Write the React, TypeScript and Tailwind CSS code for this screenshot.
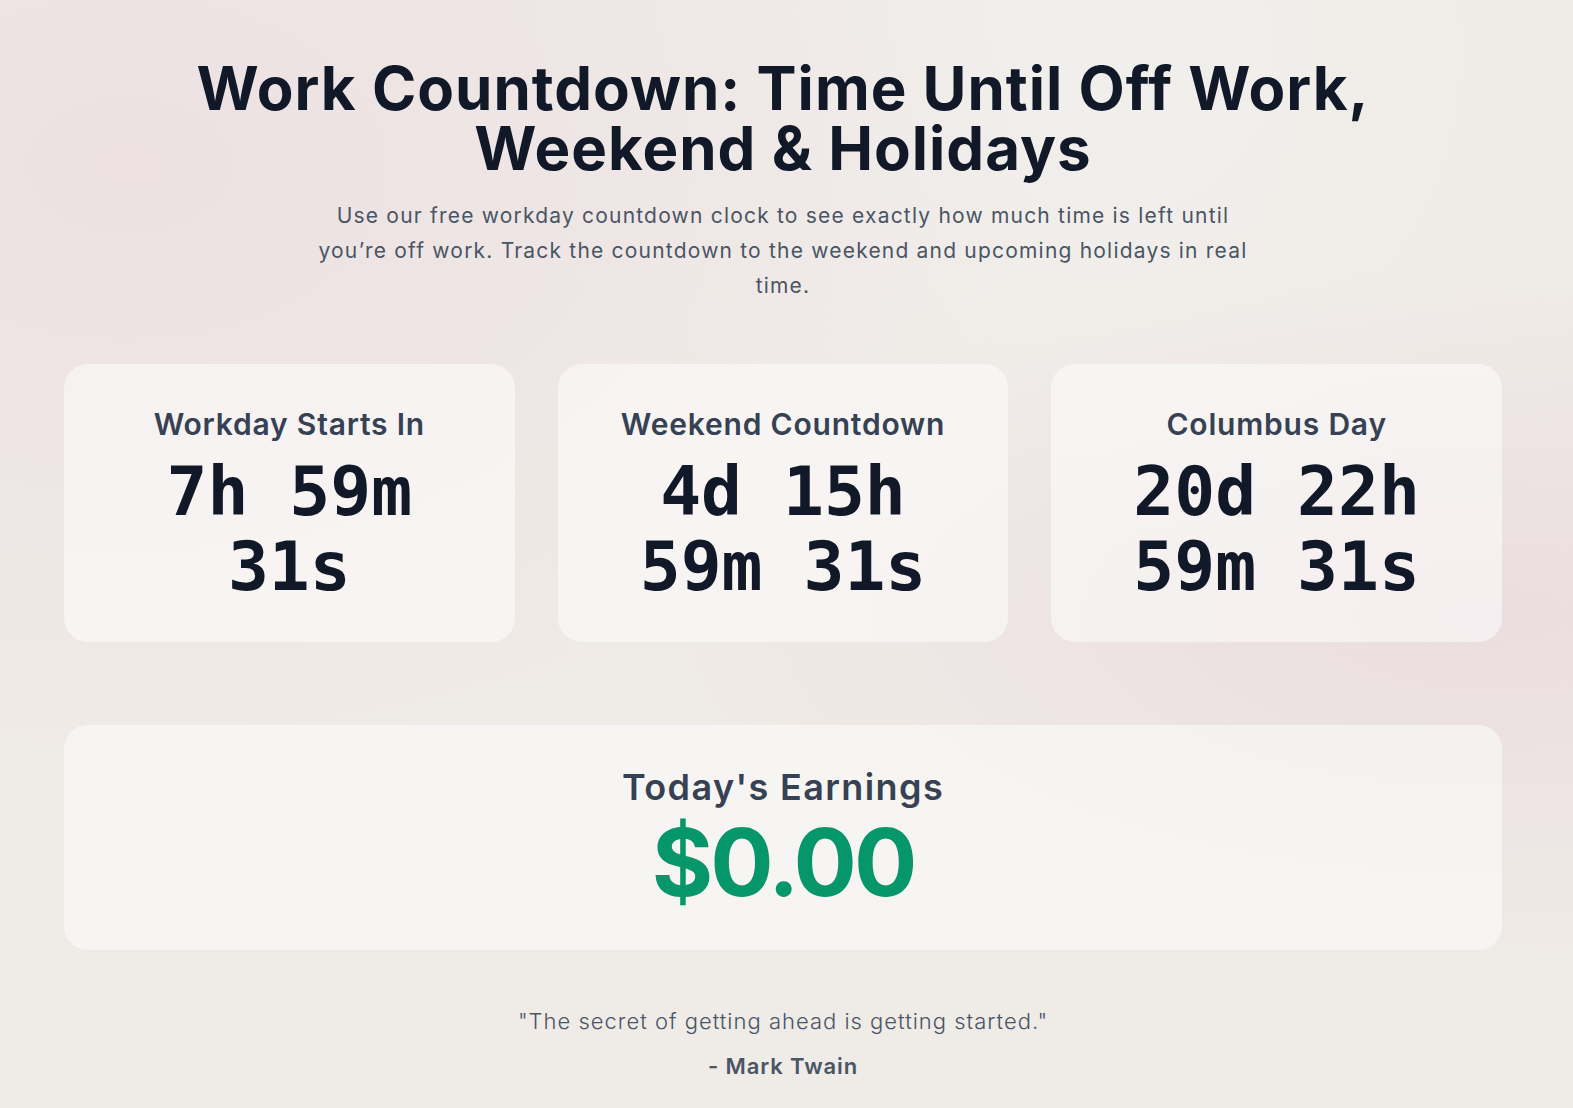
export default function App() {
  const timers = [
    { title: "Workday Starts In", lines: ["7h 59m", "31s"] },
    { title: "Weekend Countdown", lines: ["4d 15h", "59m 31s"] },
    { title: "Columbus Day", lines: ["20d 22h", "59m 31s"] },
  ];

  return (
    <div className="min-h-screen font-['Inter',sans-serif] bg-[#efebe6] bg-[radial-gradient(ellipse_at_8%_15%,#ede1e3_0%,transparent_45%),radial-gradient(ellipse_at_95%_55%,#ebdde0_0%,transparent_40%),radial-gradient(ellipse_at_70%_5%,#f1efec_0%,transparent_40%)]">
      <div className="pt-[58px] pb-10 pl-16 pr-[71px]">
        <h1 className="text-center text-[60px] leading-[60px] font-bold tracking-[1px] text-[#111827]">
          Work Countdown: Time Until Off Work,
          <br />
          Weekend &amp; Holidays
        </h1>
        <p className="mt-5 text-center text-[21px] leading-[35px] tracking-[1.2px] text-gray-600">
          Use our free workday countdown clock to see exactly how much time is left until
          <br />
          you’re off work. Track the countdown to the weekend and upcoming holidays in real
          <br />
          time.
        </p>

        <div className="mt-[61px] grid grid-cols-3 gap-[43px]">
          {timers.map((t, i) => (
            <div key={i} className="bg-white/50 rounded-3xl pt-[42px] pb-[38px] px-6 text-center">
              <h2 className="text-3xl leading-9 font-semibold tracking-[0.8px] text-gray-700">{t.title}</h2>
              <div className="mt-3 font-['DejaVu_Sans_Mono',monospace] font-bold text-[68px] leading-[75px] text-[#111827]">
                {t.lines.map((l, j) => (
                  <div key={j}>{l}</div>
                ))}
              </div>
            </div>
          ))}
        </div>

        <div className="mt-[83px] bg-white/50 rounded-3xl py-10 text-center">
          <h2 className="text-4xl leading-[44px] font-semibold tracking-[1.4px] text-gray-700">Today's Earnings</h2>
          <p className="mt-[5px] text-[94px] leading-[96px] font-bold tracking-[-3px] text-[#059669]">$0.00</p>
        </div>

        <div className="mt-[57px] text-center text-[22px] leading-7 text-gray-600">
          <p className="font-light tracking-[1px]">"The secret of getting ahead is getting started."</p>
          <p className="mt-[17px] font-semibold tracking-[0.9px]">- Mark Twain</p>
        </div>
      </div>
    </div>
  );
}
